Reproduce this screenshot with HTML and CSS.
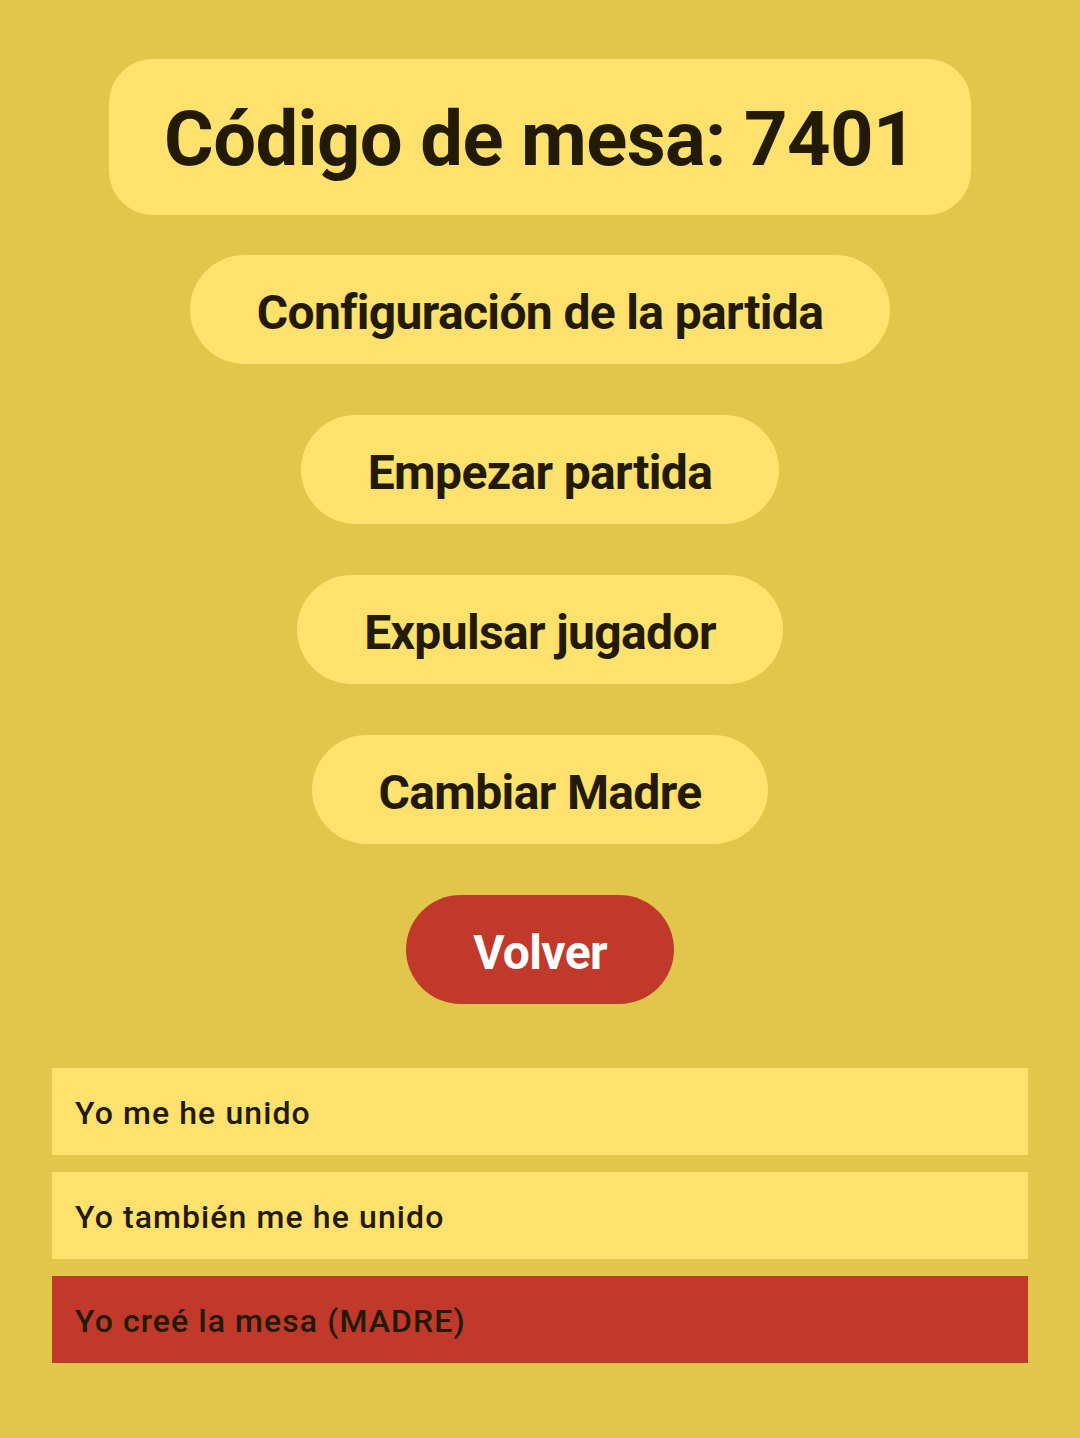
FILE: index.html
```html
<!DOCTYPE html>
<html lang="es">
<head>
<meta charset="utf-8">
<link rel="stylesheet" href="styles.css">
</head>
<body>
<main class="screen">
  <div class="actions">
    <div class="code">Código de mesa: 7401</div>
    <button class="btn btn-config">Configuración de la partida</button>
    <button class="btn">Empezar partida</button>
    <button class="btn">Expulsar jugador</button>
    <button class="btn">Cambiar Madre</button>
    <button class="btn btn-back">Volver</button>
  </div>
  <ul class="players">
    <li class="player">Yo me he unido</li>
    <li class="player">Yo también me he unido</li>
    <li class="player player-mother">Yo creé la mesa (MADRE)</li>
  </ul>
</main>
</body>
</html>
```
FILE: styles.css
```css
html, body {
  margin: 0;
  padding: 0;
  background: #E2C54B;
}
body {
  width: 1080px;
  height: 1438px;
  font-family: Roboto, "Liberation Sans", sans-serif;
  color: #231A02;
}
.screen {
  display: flex;
  flex-direction: column;
  align-items: center;
  padding-top: 59px;
}
.actions {
  display: flex;
  flex-direction: column;
  align-items: center;
}
.code {
  width: 862px;
  height: 156px;
  box-sizing: border-box;
  padding-top: 4px;
  background: #FFE16E;
  border-radius: 44px;
  display: flex;
  align-items: center;
  justify-content: center;
  font-weight: 700;
  font-size: 76px;
  letter-spacing: -0.65px;
  margin-bottom: 40px;
}
.btn {
  border: none;
  background: #FFE16E;
  color: #231A02;
  font-family: Roboto, "Liberation Sans", sans-serif;
  font-weight: 700;
  font-size: 48px;
  letter-spacing: -0.65px;
  height: 109px;
  padding: 5px 67px 0;
  border-radius: 55px;
  margin-bottom: 51px;
}
.btn-back {
  background: #C0392B;
  color: #FFFFFF;
  margin-bottom: 0;
}
.players {
  list-style: none;
  margin: 64px 0 0;
  padding: 0;
  width: 976px;
  display: flex;
  flex-direction: column;
  gap: 17px;
}
.player {
  height: 87px;
  box-sizing: border-box;
  background: #FFE16E;
  display: flex;
  align-items: center;
  padding: 3px 0 0 23px;
  font-size: 32px;
  font-weight: 500;
  letter-spacing: 1.1px;
}
.player-mother {
  background: #C0392B;
}
```
